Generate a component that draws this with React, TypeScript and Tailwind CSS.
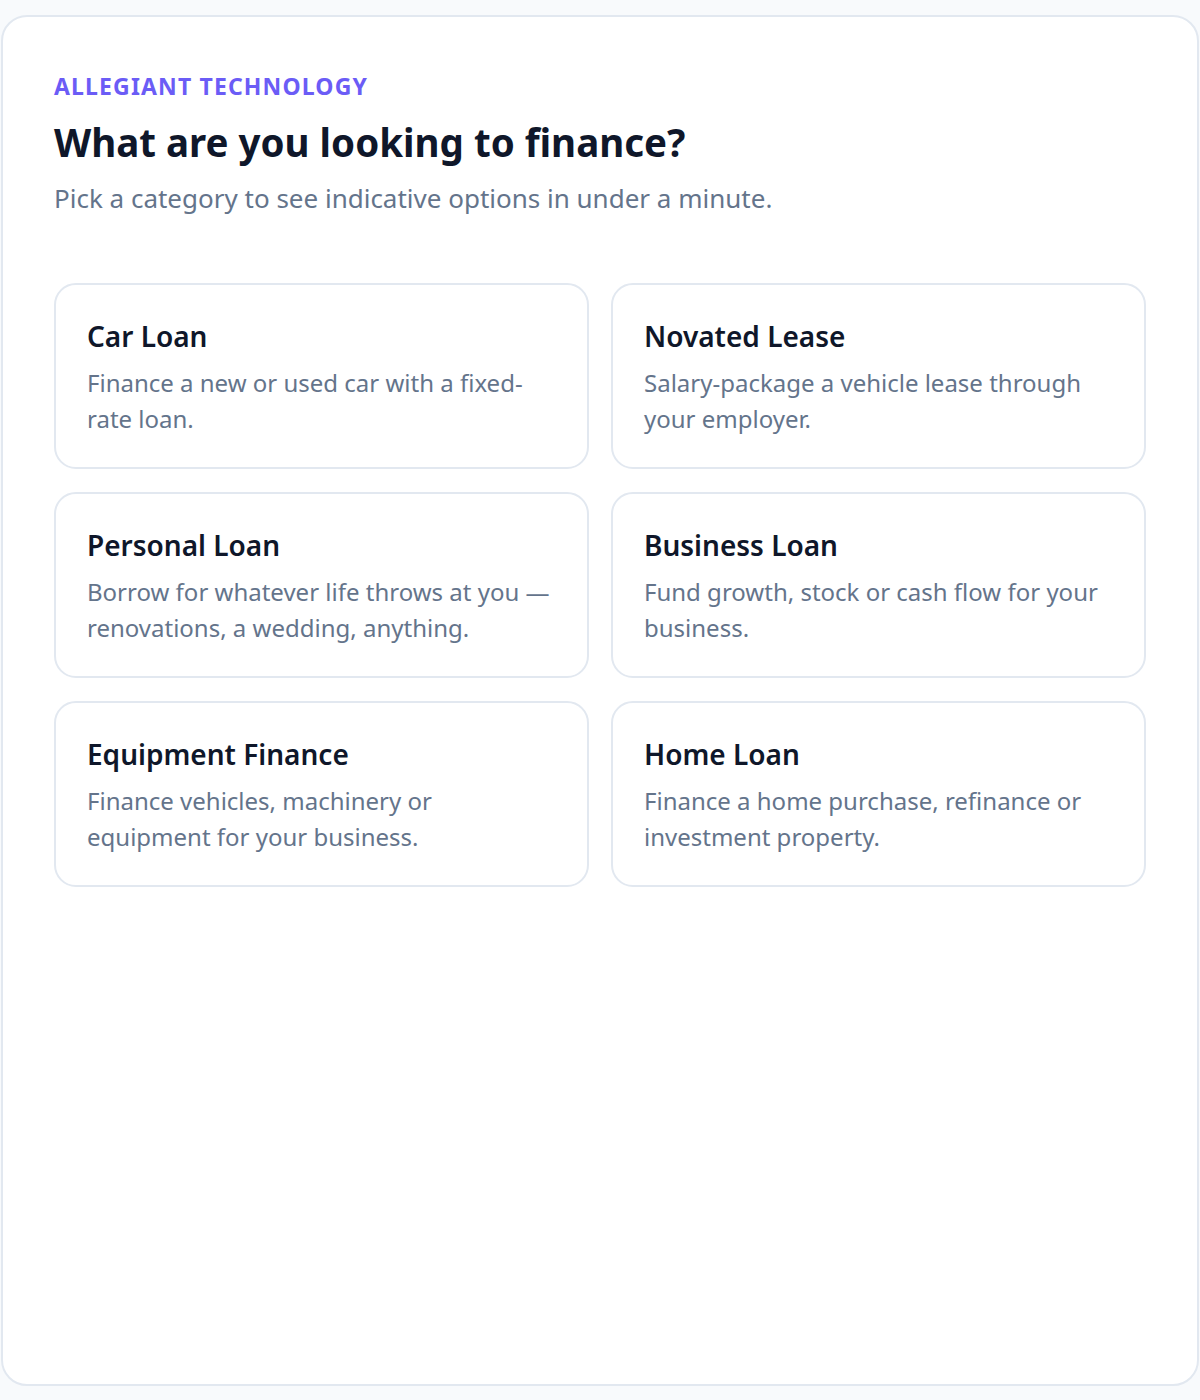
import React from 'react';

interface Category {
    title: string;
    description: string;
}

const categories: Category[] = [
    {title: 'Car Loan', description: 'Finance a new or used car with a fixed-rate loan.'},
    {title: 'Novated Lease', description: 'Salary-package a vehicle lease through your employer.'},
    {title: 'Personal Loan', description: 'Borrow for whatever life throws at you — renovations, a wedding, anything.'},
    {title: 'Business Loan', description: 'Fund growth, stock or cash flow for your business.'},
    {title: 'Equipment Finance', description: 'Finance vehicles, machinery or equipment for your business.'},
    {title: 'Home Loan', description: 'Finance a home purchase, refinance or investment property.'},
];

const CategoryCard: React.FC<{ category: Category }> = ({category}) => {
    return (
        <button
            type="button"
            className="text-left bg-white border-2 border-[#e2e8f0] rounded-[22px] px-[31px] pt-[33px] pb-[30px] hover:border-[#c7c2fb]"
        >
            <div className="text-[28px] leading-[36px] font-semibold text-[#0f172a]">{category.title}</div>
            <p className="mt-[11px] text-[24px] leading-[36px] text-[#64748b]">{category.description}</p>
        </button>
    );
};

export default function App() {
    return (
        <div
            className="min-h-[1400px] bg-[#f8fafc] pt-[15px] px-[1px]"
            style={{fontFamily: '"Noto Sans", "Open Sans", sans-serif'}}
        >
            <div className="h-[1371px] bg-white border-2 border-[#e2e8f0] rounded-[26px] px-[51px] pt-[54px]">
                <div className="text-[23px] leading-[30px] font-bold tracking-[0.05em] text-[#6b5cf6] uppercase">
                    Allegiant Technology
                </div>
                <h1 className="mt-[17px] text-[38.5px] leading-[48px] font-bold text-[#0f172a]">
                    What are you looking to finance?
                </h1>
                <p className="mt-[14px] text-[26px] leading-[36px] text-[#64748b]">
                    Pick a category to see indicative options in under a minute.
                </p>
                <div className="mt-[67px] grid grid-cols-2 gap-x-[22px] gap-y-[23px]">
                    {categories.map((c) => (
                        <CategoryCard key={c.title} category={c}/>
                    ))}
                </div>
            </div>
        </div>
    );
}
